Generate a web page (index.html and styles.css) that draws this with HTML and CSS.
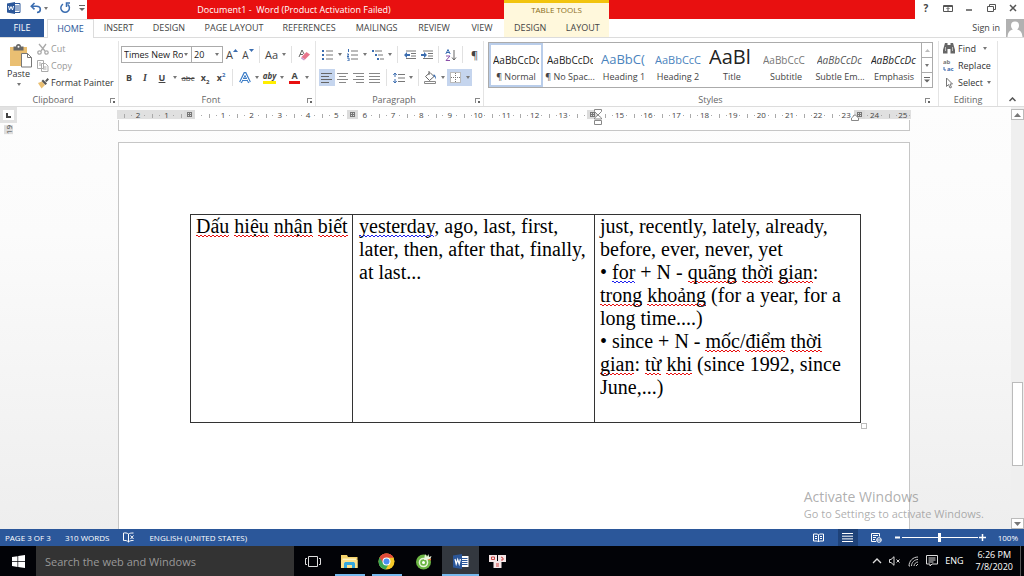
FILE: index.html
```html
<!DOCTYPE html>
<html lang="en">
<head>
<meta charset="utf-8">
<title>Document1 - Word</title>
<link rel="stylesheet" href="styles.css">
</head>
<body>

<header class="titlebar">
  <div class="quick">
    <svg class="word-logo" width="14" height="12" viewBox="0 0 14 12"><path d="M7 1.5h6v9H7z" fill="#fff" stroke="#2b579a"/><path d="M8 4h4M8 6h4M8 8h4" stroke="#2b579a"/><path d="M0 1.5L8 0v12L0 10.500z" fill="#2b579a"/><path d="M1.500 4l1 4L4 4.500 5.500 8l1-4" fill="none" stroke="#fff"/></svg>
    <button class="q-btn" aria-label="Undo"><svg width="12" height="12" viewBox="0 0 12 12" fill="none" stroke="#3b6db0" stroke-width="1.600"><path d="M4.500 1L1.300 4.200l3.200 3.200M1.500 4.200h5c5 0 5 5.800.5 6.300"/></svg></button>
    <i class="caret"></i>
    <button class="q-btn q-redo" aria-label="Repeat"><svg width="12" height="12" viewBox="0 0 12 12" fill="none" stroke="#3b6db0" stroke-width="1.500"><path d="M4 2.200A4.300 4.300 0 1 0 8.700 2.500M11 1H7.500v4"/></svg></button>
    <button class="q-btn q-more" aria-label="Customize toolbar"><svg width="6" height="7" viewBox="0 0 6 7"><path d="M0 .5h6" stroke="#666"/><path d="M0 3h6L3 6z" fill="#666"/></svg></button>
  </div>
  <div class="doc-title">Document1 -&nbsp; Word (Product Activation Failed)</div>
  <div class="tools-title">TABLE TOOLS</div>
  <div class="title-fill"></div>
  <div class="win-btns">
    <button aria-label="Help"><b>?</b></button>
    <button aria-label="Ribbon options"><svg width="10" height="9" viewBox="0 0 10 9" fill="none" stroke="#555"><path d="M.5 1.500h9v6h-9zM.5 2.500h9M5 7V4M3.500 5L5 3.500 6.500 5"/></svg></button>
    <button aria-label="Minimize"><svg width="8" height="8" viewBox="0 0 8 8"><path d="M1 6h6" stroke="#555" stroke-width="1.500"/></svg></button>
    <button aria-label="Restore"><svg width="9" height="8" viewBox="0 0 9 8" fill="none" stroke="#555"><path d="M.5 2.500h6v5h-6zM2.500 2.500v-2h6v5h-2"/></svg></button>
    <button aria-label="Close"><svg width="8" height="8" viewBox="0 0 8 8"><path d="M1 1l6 6M7 1L1 7" stroke="#555" stroke-width="1.500"/></svg></button>
  </div>
</header>

<nav class="tabs">
  <button class="tab file">FILE</button>
  <button class="tab active">HOME</button>
  <button class="tab t-ins">INSERT</button>
  <button class="tab t-des">DESIGN</button>
  <button class="tab t-page">PAGE LAYOUT</button>
  <button class="tab t-ref">REFERENCES</button>
  <button class="tab t-mail">MAILINGS</button>
  <button class="tab t-des">REVIEW</button>
  <button class="tab t-view">VIEW</button>
  <div class="tool-tabs">
    <button class="tab">DESIGN</button>
    <button class="tab">LAYOUT</button>
  </div>
  <a class="signin" href="#">Sign in</a>
  <svg class="avatar" width="18" height="18" viewBox="0 0 18 18"><path d="M0 0h18v18H0z" fill="#b1b1b1"/><path d="M9 2.500a4 4 0 0 1 4 4c0 2-1 3.500-2 4 3 .8 5 2 5.500 7.500h-15C2 12.500 4 11.300 7 10.500c-1-.5-2-2-2-4a4 4 0 0 1 4-4z" fill="#fff"/></svg>
</nav>

<section class="ribbon">
  <div class="group g-clip">
    <div class="group-body clip">
      <button class="paste">
        <svg width="22" height="24" viewBox="0 0 22 24"><path d="M0 3h17v19H0z" fill="#eabf72"/><path d="M3.500 2.500h2.500a2.500 2.500 0 0 1 5 0h2.500v4h-10z" fill="#666"/><circle cx="8.500" cy="2.700" r="1" fill="#fff"/><path d="M11.500 9.500h6l4 4v9.500h-10z" fill="#fff" stroke="#777"/><path d="M17.500 9.500v4h4" fill="none" stroke="#777"/></svg>
        <span>Paste</span><i class="caret"></i>
      </button>
      <div class="clip-list">
        <button class="off"><svg width="12" height="12" viewBox="0 0 12 12" fill="none" stroke="#aaa" stroke-width="1.300"><path d="M2 1l6 7M9 1L4 8"/><circle cx="2.500" cy="9.500" r="1.700"/><circle cx="9.500" cy="9.500" r="1.700"/></svg>Cut</button>
        <button class="off"><svg width="12" height="12" viewBox="0 0 12 12" fill="#fff" stroke="#aaa"><path d="M.5.5h6v8h-6zM4.500 3.500h4l2.500 2.500v5.500H4.500z"/><path d="M2 3h2M2 5h2M6 7h3.500M6 9h3.500"/></svg>Copy</button>
        <button><svg width="12" height="12" viewBox="0 0 12 12"><path d="M1 6l4-1.500L8 8l-3.500 3.500z" fill="#eabf72"/><path d="M4.500 4L6 2.500l4 4L8.500 8zM8 4l2.500-3L12 2.500 9.500 5z" fill="#555"/></svg>Format Painter</button>
      </div>
    </div>
    <div class="group-name">Clipboard<i class="launch"></i></div>
  </div>

  <div class="group g-font">
    <div class="group-body rows">
      <div class="row">
        <select class="combo c-name" aria-label="Font"><option>Times New Ro</option></select>
        <select class="combo c-size" aria-label="Font size"><option>20</option></select>
        <button class="b16 grow" aria-label="Grow font">A<svg width="5" height="3"><path d="M0 3L2.500 0 5 3z" fill="#3b6db0"/></svg></button>
        <button class="b16 grow shrink" aria-label="Shrink font">A<svg width="5" height="3"><path d="M0 0h5L2.500 3z" fill="#3b6db0"/></svg></button>
        <i class="sep"></i>
        <button class="b17 big">Aa</button><i class="caret"></i>
        <i class="sep"></i>
        <button class="b17" aria-label="Clear formatting"><svg width="12" height="12" viewBox="0 0 12 12"><path d="M1 8L4 1l2 4M2 5.500h3" fill="none" stroke="#666"/><path d="M3.500 8L8.500 3 12 5.500 7 10.500z" fill="#e8748c"/><path d="M3.500 8l3.500 2.500-1 1L3 9.500z" fill="#c9c"/></svg></button>
      </div>
      <div class="row">
        <button class="b16"><b>B</b></button>
        <button class="b16 ital"><b>I</b></button>
        <button class="b18 under"><b>U</b></button><i class="caret"></i>
        <button class="b18 strike">abc</button>
        <button class="b16"><b>x<sub>2</sub></b></button>
        <button class="b16"><b>x<sup>2</sup></b></button>
        <i class="sep"></i>
        <button class="b17 effect" aria-label="Text effects"><svg width="12" height="12" viewBox="0 0 12 12"><path d="M1.500 10.500L6 1l4.500 9.500M3.300 7.500h5.400" fill="none" stroke="#3f7fc8" stroke-width="3"/><path d="M1.500 10.500L6 1.500l4.500 9M3.300 7.500h5.400" fill="none" stroke="#fff" stroke-width="1"/></svg></button><i class="caret"></i>
        <button class="b17 mark"><em>aby</em></button><i class="caret"></i>
        <button class="b17 color"><b>A</b></button><i class="caret"></i>
      </div>
    </div>
    <div class="group-name">Font<i class="launch"></i></div>
  </div>

  <div class="group g-para">
    <div class="group-body rows">
      <div class="row">
        <button class="b17" aria-label="Bullets"><svg width="12" height="12" viewBox="0 0 12 12"><path d="M4 2h7M4 6h7M4 10h7" stroke="#777"/><path d="M0 2h2M0 6h2M0 10h2" stroke="#3b6db0" stroke-width="2"/></svg></button><i class="caret"></i>
        <button class="b17" aria-label="Numbering"><svg width="12" height="12" viewBox="0 0 12 12"><path d="M4 2h7M4 6h7M4 10h7" stroke="#777"/><path d="M1.500 0v3M0 5h1.500v1L0 7.500h2M0 9h2v3H0" stroke="#3b6db0" fill="none"/></svg></button><i class="caret"></i>
        <button class="b17" aria-label="Multilevel list"><svg width="12" height="12" viewBox="0 0 12 12"><path d="M3 2h7M6 6h5M8 10h4" stroke="#777"/><path d="M0 2h2M3 6h2M5 10h2" stroke="#3b6db0" stroke-width="2"/></svg></button><i class="caret"></i>
        <i class="sep"></i>
        <button class="b17" aria-label="Decrease indent"><svg width="12" height="10" viewBox="0 0 12 10"><path d="M2 1h10M7 3.500h5M7 6h5M2 8.500h10" stroke="#777"/><path d="M0 5l3-3v2h3v2H3v2z" fill="#3b6db0"/></svg></button>
        <button class="b17" aria-label="Increase indent"><svg width="12" height="10" viewBox="0 0 12 10"><path d="M2 1h10M7 3.500h5M7 6h5M2 8.500h10" stroke="#777"/><path d="M6 5L3 2v2H0v2h3v2z" fill="#3b6db0"/></svg></button>
        <i class="sep"></i>
        <button class="b17" aria-label="Sort"><svg width="12" height="12" viewBox="0 0 12 12" fill="none"><path d="M.8 5L3 .5 5.200 5M1.500 3.500h3" stroke="#3b6db0"/><path d="M1 7h4L1 11.500h4" stroke="#8a4fa8"/><path d="M9 1v10M7 8.500L9 11l2-2.500" stroke="#666"/></svg></button>
        <i class="sep"></i>
        <button class="b17 big">¶</button>
      </div>
      <div class="row">
        <button class="b16 on" aria-label="Align left"><svg width="12" height="10" viewBox="0 0 12 10"><path d="M0 .5h11M0 3.500h8M0 6.500h11M0 9.500h8" stroke="#666"/></svg></button>
        <button class="b16" aria-label="Center"><svg width="12" height="10" viewBox="0 0 12 10"><path d="M0 .5h11M2 3.500h7M0 6.500h11M2 9.500h7" stroke="#888"/></svg></button>
        <button class="b16" aria-label="Align right"><svg width="12" height="10" viewBox="0 0 12 10"><path d="M0 .5h11M3 3.500h8M0 6.500h11M3 9.500h8" stroke="#888"/></svg></button>
        <button class="b16" aria-label="Justify"><svg width="12" height="10" viewBox="0 0 12 10"><path d="M0 .5h11M0 3.500h11M0 6.500h11M0 9.500h11" stroke="#888"/></svg></button>
        <i class="sep"></i>
        <button class="b17" aria-label="Line spacing"><svg width="12" height="12" viewBox="0 0 12 12"><path d="M5 2.500h7M5 6h7M5 9.500h7" stroke="#777"/><path d="M2 1v4M2 7v4M.3 3L2 1l1.700 2M.3 9L2 11l1.700-2" stroke="#3b6db0" fill="none"/></svg></button><i class="caret"></i>
        <i class="sep"></i>
        <button class="b17" aria-label="Shading"><svg width="13" height="13" viewBox="0 0 13 13"><path d="M1.500 5.500L6 1.500l4 4-4.500 4z" fill="#fff" stroke="#666"/><path d="M5 0v4" stroke="#666"/><path d="M9.500 3.500c2 0 2.500 2 2.500 5-1-2-1-3-2.500-3z" fill="#3b6db0"/><path d="M.5 10.500h11v2H.5z" fill="#fff" stroke="#888"/></svg></button><i class="caret"></i>
        <button class="b17 on" aria-label="Borders"><svg width="11" height="11" viewBox="0 0 11 11"><path d="M0 0h11v11H0z" fill="#fff"/><path d="M.5.5h10v10H.5zM5.500 1v9M1 5.500h9" fill="none" stroke="#777" stroke-dasharray="1 1"/></svg></button><i class="caret on"></i>
      </div>
    </div>
    <div class="group-name">Paragraph<i class="launch"></i></div>
  </div>

  <div class="group g-styles">
    <div class="group-body">
      <div class="gallery">
        <button class="style picked"><span class="s-norm">AaBbCcDc</span><small>¶ Normal</small></button>
        <button class="style"><span class="s-norm">AaBbCcDc</span><small>¶ No Spac...</small></button>
        <button class="style"><span class="s-h1">AaBbC(</span><small>Heading 1</small></button>
        <button class="style"><span class="s-h2">AaBbCcC</span><small>Heading 2</small></button>
        <button class="style"><span class="s-title">AaBl</span><small>Title</small></button>
        <button class="style"><span class="s-sub">AaBbCcC</span><small>Subtitle</small></button>
        <button class="style"><span class="s-subtle">AaBbCcDc</span><small>Subtle Em...</small></button>
        <button class="style"><span class="s-emph">AaBbCcDc</span><small>Emphasis</small></button>
        <div class="gal-scroll">
          <button aria-label="Row up"><svg width="5" height="3"><path d="M0 3L2.500 0 5 3z" fill="#bbb"/></svg></button>
          <button aria-label="Row down"><i class="caret"></i></button>
          <button aria-label="More styles"><svg width="6" height="6"><path d="M0 .5h6" stroke="#666"/><path d="M0 2.500h6L3 5.500z" fill="#666"/></svg></button>
        </div>
      </div>
    </div>
    <div class="group-name">Styles<i class="launch"></i></div>
  </div>

  <div class="group g-edit">
    <div class="group-body edit">
      <button><svg width="12" height="11" viewBox="0 0 12 11"><path d="M2 0h2.500v2h3V0H10l2 7v3.500H7.500V6h-3v4.500H0V7z" fill="#666"/><path d="M2.500 4v4M9.500 4v4" stroke="#bbb"/></svg>Find<i class="caret far"></i></button>
      <button><svg class="rep" width="12" height="13" viewBox="0 0 12 13"><text x="0" y="5">ab</text><text x="4" y="12" class="ac">ac</text><path d="M1 8v3h2" fill="none" stroke="#3b6db0"/></svg>Replace</button>
      <button><svg width="12" height="12" viewBox="0 0 12 12"><path d="M3.500 1v8.500l2-2 1.500 3.500 1.500-.7L7 7h2.500z" fill="#fff" stroke="#777"/></svg>Select<i class="caret"></i></button>
    </div>
    <div class="group-name">Editing</div>
  </div>
  <button class="collapse" aria-label="Collapse ribbon"><svg width="7" height="5"><path d="M.5 4L3.500 1l3 3" fill="none" stroke="#555" stroke-width="1.500"/></svg></button>
</section>

<main class="work">
  <div class="vruler">
    <div class="corner"><span><svg width="5" height="5"><path d="M1 0v4h4" fill="none" stroke="#444" stroke-width="2"/></svg></span></div>
    <span class="vnum">19</span>
  </div>

  <div class="canvas">
    <div class="ruler">
      <ul>
        <li>2</li><li>1</li><li></li><li>1</li><li>2</li><li>3</li><li>4</li><li>5</li><li>6</li><li>7</li><li>8</li><li>9</li><li>10</li><li>11</li><li>12</li><li>13</li><li></li><li>15</li><li>16</li><li>17</li><li>18</li><li>19</li><li>20</li><li>21</li><li>22</li><li>23</li><li>24</li><li>25</li>
      </ul>
      <i class="col-mark m1"></i><i class="col-mark m2"></i><i class="col-mark m3"></i><i class="col-mark m4"></i>
      <svg class="indent" width="8" height="16" viewBox="0 0 8 16" fill="#fff" stroke="#888"><path d="M.5.500h7v2L4 6 .5 2.500zM.5 10V9L4 6l3.500 3v1zM.5 11.500h7v4h-7z"/></svg>
      <svg class="indent-r" width="8" height="7" viewBox="0 0 8 7" fill="#fff" stroke="#888"><path d="M.5 6.500V4L4 .7 7.500 4v2.500z"/></svg>
    </div>
    <div class="page-prev"></div>
    <article class="page">
      <table class="doc-table">
        <tr>
          <td class="c1"><u>Dấu</u> <u>hiệu</u> <u>nhận</u> <u>biết</u></td>
          <td class="c2"><u class="gram">yesterday</u>, ago, last, first,<br>later, then, after that, finally,<br>at last...</td>
          <td class="c3">just, recently, lately, already,<br>before, ever, never, yet<br>• <u class="gram">for</u> + N - <u>quãng</u> <u>thời</u> <u>gian</u>:<br><u>trong</u> <u>khoảng</u> (for a year, for a<br>long time....)<br>• since + N - <u>mốc</u>/<u>điểm</u> <u>thời</u><br><u>gian</u>: <u>từ</u> <u>khi</u> (since 1992, since<br>June,...)<br>&nbsp;</td>
        </tr>
      </table>
      <i class="handle"></i>
    </article>
  </div>

  <div class="scroll">
    <button aria-label="Scroll up"><svg width="7" height="4"><path d="M0 4l3.500-4L7 4z" fill="#777"/></svg></button>
    <div class="track"><div class="thumb"></div></div>
    <button aria-label="Scroll down"><svg width="7" height="4"><path d="M0 0h7L3.500 4z" fill="#777"/></svg></button>
  </div>

  <div class="watermark">
    <p class="wm-big">Activate Windows</p>
    <p>Go to Settings to activate Windows.</p>
  </div>
</main>

<footer class="status">
  <span>PAGE 3 OF 3</span>
  <span>310 WORDS</span>
  <svg width="12" height="11" viewBox="0 0 12 11" fill="none" stroke="#fff"><path d="M5.500 2C4 .8 2 .8.5 1v7.500c2-.2 3.500 0 5 1.500V2c1-.8 2.500-1 5-1M5.500 10c1.500-1.500 3-1.500 5-1.500M7.500 3.500l3 3.500M10.500 3.500L7.500 7"/></svg>
  <span>ENGLISH (UNITED STATES)</span>
  <div class="views">
    <button aria-label="Read mode"><svg width="11" height="10" viewBox="0 0 11 10" fill="none" stroke="#fff"><path d="M.5 1h4l1 1 1-1h4v7h-4l-1 1-1-1h-4zM5.500 2v7M2 3.500h2M2 5.500h2M7 3.500h2M7 5.500h2"/></svg></button>
    <button class="cur" aria-label="Print layout"><svg width="11" height="9" viewBox="0 0 11 9"><path d="M0 .5h11M0 3.200h11M0 5.900h11M0 8.500h11" stroke="#fff"/></svg></button>
    <button aria-label="Web layout"><svg width="11" height="10" viewBox="0 0 11 10" fill="none" stroke="#fff"><path d="M5 8.500H.5v-8h8v3M2 2.500h5M2 4.500h3M2 6.500h2"/><circle cx="8" cy="7" r="2.300"/><path d="M6 7h4"/></svg></button>
  </div>
  <div class="zoom">
    <button aria-label="Zoom out"><svg width="7" height="7"><path d="M1 3.500h5" stroke="#fff" stroke-width="2"/></svg></button>
    <input type="range" min="0" max="100" value="50" aria-label="Zoom">
    <button aria-label="Zoom in"><svg width="7" height="7"><path d="M0 3.500h7M3.500 0v7" stroke="#fff" stroke-width="1.500"/></svg></button>
    <span>100%</span>
  </div>
</footer>

<div class="taskbar">
  <button class="start" aria-label="Start"><svg width="13" height="13" viewBox="0 0 13 13" fill="#fff"><path d="M0 2l5.500-.8v5H0zM6.200 1L13 0v6.200H6.200zM0 6.900h5.500v5L0 11.100zM6.200 6.900H13V13l-6.800-1z"/></svg></button>
  <input class="search" type="text" placeholder="Search the web and Windows" aria-label="Search the web and Windows">
  <button class="app" aria-label="Task view"><svg width="16" height="11" viewBox="0 0 16 11" fill="none" stroke="#ddd"><path d="M3.500.5h9v10h-9zM2 2.500H.5v6H2M14 2.500h1.500v6H14"/></svg></button>
  <button class="app open" aria-label="File Explorer"><svg width="17" height="15" viewBox="0 0 17 15"><path d="M0 1h6l1 2h9.500v11H0z" fill="#f5d36b"/><path d="M1.500 4.500H15V8H1.500z" fill="#fff3c0"/><path d="M0 6h16.500v8H0z" fill="#fbe08a"/><path d="M3 14V9.500L4 8h9l1 1.500V14h-3v-3H6v3z" fill="#35a7dd"/></svg></button>
  <button class="app open" aria-label="Chrome"><svg width="17" height="17" viewBox="0 0 17 17"><circle cx="8.500" cy="8.500" r="8" fill="#f6c928"/><path d="M8.500 8.500L1.600 4.500a8 8 0 0 1 13.800 0z" fill="#df4b3b"/><path d="M1.600 4.500a8 8 0 0 0 6 12l3.500-6z" fill="#3aa757"/><path d="M8.500 4.500h6.900l1 4h-6z" fill="#f6c928"/><path d="M1.600 4.500a8 8 0 0 1 13.800 0H8.500L5 10z" fill="#df4b3b"/><circle cx="8.500" cy="8.500" r="4" fill="#fff"/><circle cx="8.500" cy="8.500" r="3" fill="#4a8df0"/></svg></button>
  <button class="app" aria-label="Coc Coc"><svg width="16" height="17" viewBox="0 0 16 17"><circle cx="7.500" cy="9" r="7.500" fill="#6cb644"/><circle cx="7.500" cy="9.500" r="4.800" fill="#e8f4dc"/><circle cx="7.500" cy="9.500" r="3.300" fill="#6cb644"/><circle cx="7.500" cy="9.500" r="1.500" fill="#fff"/><path d="M8 7l1-6 2 3 1.500-3 .5 3 2.500-1-1.500 4z" fill="#e8f4dc"/><path d="M11 6.500l4-1v2z" fill="#e8793a"/></svg></button>
  <button class="app open cur" aria-label="Word"><svg width="16" height="15" viewBox="0 0 16 15"><path d="M8 2h7.500v11H8z" fill="#fff"/><path d="M9 4.500h5.500M9 6.500h5.500M9 8.500h5.500M9 10.500h5.500" stroke="#2b579a"/><path d="M0 1.500L9 0v15l-9-1.500z" fill="#2b579a"/><path d="M2 5l1.200 5L4.700 5.500 6.200 10l1.200-5" fill="none" stroke="#fff" stroke-width="1.200"/></svg></button>
  <button class="app" aria-label="UniKey"><svg width="17" height="13" viewBox="0 0 17 13"><path d="M0 0h8v7H0zM9 0h8v7H9zM4.500 6h8v7h-8z" fill="#f4e6e6"/><path d="M2.500 2h3v2.500h-3zM12 2l2 1v2h-2M7 9h3M7 11h3" fill="none" stroke="#c44"/></svg></button>
  <div class="tray">
    <svg width="10" height="6"><path d="M1 5l4-4 4 4" fill="none" stroke="#ddd" stroke-width="1.300"/></svg>
    <svg width="12" height="10" viewBox="0 0 12 10" fill="none" stroke="#ddd"><path d="M.5 3.500H2L5 .7v8.600L2 6.500H.5zM7.500 3.500l3 3M10.500 3.500l-3 3"/></svg>
    <svg width="11" height="11" viewBox="0 0 11 11" fill="none" stroke="#ccc"><path d="M1 10C1 5 5 1 10 1M3.500 10C3.500 6.500 6.500 3.500 10 3.500M6 10c0-2 2-4 4-4M8 10l2-2M1 10h1"/></svg>
    <svg width="12" height="12" viewBox="0 0 12 12" fill="none" stroke="#ddd"><path d="M.5.5h11v8.500H6L4 11V9H.5zM2.500 3h7M2.500 5h7M2.500 7h5"/></svg>
    <span>ENG</span>
    <time>6:26 PM<br>7/8/2020</time>
  </div>
  <i class="peek"></i>
</div>

</body>
</html>
```
FILE: styles.css
```css
* {
  box-sizing: border-box;
}
body {
  margin: 0;
  height: 100vh;
  display: grid;
  grid-template-rows: 19px 19px 69px 1fr 17px 30px;
  grid-template-columns: minmax(0, 1fr);
  overflow: hidden;
  background: #fff;
  color: #444;
  font-family: "Open Sans", "Noto Sans", sans-serif;
  font-size: 9px;
  line-height: 12px;
}
button {
  border: 0;
  padding: 0;
  background: none;
  color: inherit;
  font: inherit;
  display: flex;
  align-items: center;
  justify-content: center;
  white-space: nowrap;
}
svg {
  flex: none;
}

/* title bar */
.titlebar {
  display: flex;
}
.quick {
  width: 87px;
  display: flex;
  align-items: center;
  padding: 0 2px 3px 7px;
}
.q-btn {
  margin-left: 9px;
}
.q-more {
  margin-left: auto;
}
.caret {
  width: 8px;
  flex: none;
  display: flex;
  align-items: center;
  justify-content: center;
}
.caret::before {
  content: "";
  border: 2px solid transparent;
  border-top: 3px solid #777;
  border-bottom: 0;
}
.doc-title {
  width: 417px;
  padding-top: 4px;
  background: #e81010;
  color: #fff;
  text-align: center;
  padding-right: 3px;
}
.tools-title {
  width: 105px;
  background: #fff8dc;
  border-top: 3px solid #f2c40f;
  color: #8a6d1c;
  text-align: center;
  padding-top: 1px;
  font-size: 8px;
}
.title-fill {
  flex: 1;
  background: #e81010;
}
.win-btns {
  width: 109px;
  display: flex;
  padding-bottom: 3px;
}
.win-btns button {
  flex: 1;
}
.win-btns b {
  font-size: 10px;
}

/* tabs */
.tabs {
  display: flex;
  border-bottom: 1px solid #dcdcdc;
}
.tab {
  padding: 0 11px;
  font-size: 9px;
}
.file {
  width: 44px;
  margin-right: 3px;
  background: #2b579a;
  color: #fff;
}
.active {
  width: 47px;
  border: 1px solid #dcdcdc;
  border-bottom: 0;
  margin-bottom: -1px;
  background: #fff;
  color: #2b579a;
}
.t-ins { width: 49px; }
.t-des { width: 52px; }
.t-page { width: 78px; }
.t-ref { width: 72px; }
.t-mail { width: 63px; }
.t-view { width: 44px; }
.tool-tabs {
  width: 105px;
  display: flex;
  background: #fff8dc;
}
.tool-tabs .tab {
  flex: 1;
  padding: 0;
}
.signin {
  margin-left: auto;
  align-self: center;
  color: #444;
  text-decoration: none;
  margin-right: 6px;
}

/* ribbon */
.ribbon {
  display: flex;
  padding-top: 3px;
  border-bottom: 1px solid #dcdcdc;
}
.group {
  display: flex;
  flex: none;
  flex-direction: column;
  border-right: 1px solid #e4e4e4;
}
.g-clip { width: 119px; }
.g-font { width: 197px; padding-left: 2px; }
.g-para { width: 168px; padding-left: 3px; }
.g-styles { flex: 1; min-width: 0; padding: 0 5px 0 4px; }
.g-edit { width: 59px; }
.group-body {
  height: 53px;
}
.group-name {
  text-align: center;
  position: relative;
  color: #666;
  font-size: 9px;
}
.g-clip .group-name {
  padding-right: 12px;
}
.g-font .group-name,
.g-para .group-name {
  padding-right: 14px;
}
.launch {
  position: absolute;
  right: 3px;
  top: 4px;
  width: 5px;
  height: 5px;
  border-left: 1px solid #888;
  border-top: 1px solid #888;
}
.launch::after {
  content: "";
  position: absolute;
  right: 0;
  bottom: 0;
  width: 2px;
  height: 2px;
  background: #666;
}
.clip {
  display: flex;
}
.paste {
  width: 37px;
  flex-direction: column;
  justify-content: flex-start;
  padding-top: 3px;
  color: #333;
}
.paste svg {
  margin-left: 4px;
}
.paste .caret {
  height: 8px;
}
.clip-list {
  display: flex;
  flex-direction: column;
  gap: 5px;
  padding-top: 2px;
}
.clip-list button {
  justify-content: flex-start;
  gap: 2px;
  color: #333;
}
.clip-list .off {
  color: #999;
}
.rows {
  display: flex;
  flex-direction: column;
  gap: 6px;
  padding-top: 5px;
}
.row {
  display: flex;
  align-items: stretch;
  height: 17px;
}
.combo {
  appearance: none;
  border: 1px solid #ababab;
  border-radius: 0;
  padding: 0 8px 0 2px;
  color: #222;
  font: inherit;
  background: #fff url("data:image/svg+xml,%3Csvg xmlns='http://www.w3.org/2000/svg' width='4' height='3'%3E%3Cpath d='M0 0h4L2 3z' fill='%23777'/%3E%3C/svg%3E") no-repeat right 3px center;
}
.c-name {
  width: 71px;
}
.c-size {
  width: 32px;
  margin: 0 1px 0 -1px;
}
.b16 { width: 16px; }
.b17 { width: 17px; }
.b18 { width: 18px; }
.sep {
  width: 1px;
  margin: 0 3px;
  background: #e1e1e1;
}
.on {
  background: #c5d5ee;
}
.grow {
  font-size: 11px;
  align-items: center;
}
.grow svg {
  align-self: flex-start;
  margin-top: 3px;
}
.shrink {
  font-size: 10px;
}
.big {
  font-size: 11px;
}
.ital {
  font-style: italic;
  font-family: "Liberation Serif", serif;
  font-size: 10px;
}
.under {
  text-decoration: underline;
}
.strike {
  text-decoration: line-through;
  font-size: 8px;
}
sub, sup {
  font-size: 6px;
  line-height: 1px;
}
sup {
  color: #3b6db0;
}
.mark em {
  font-weight: bold;
  font-size: 8px;
  line-height: 10px;
  border-bottom: 3px solid #ffee00;
}
.color b {
  line-height: 10px;
  padding: 0 2px;
  border-bottom: 3px solid #e81010;
}

.gallery {
  display: flex;
  height: 46px;
  margin-top: 1px;
  border: 1px solid #ababab;
}
.style {
  flex: 1;
  min-width: 0;
  flex-direction: column;
  justify-content: flex-end;
  padding: 0 2px 2px;
  overflow: hidden;
  border: 2px solid transparent;
}
.picked {
  border-color: #b9cdea;
}
.style span {
  width: 100%;
  overflow: hidden;
  text-align: left;
  color: #222;
}
.style small {
  font-size: 9px;
  line-height: 12px;
  margin-top: 3px;
}
.s-norm, .s-sub, .s-subtle, .s-emph {
  font-size: 10px;
  line-height: 16px;
}
.style .s-h1 {
  font-size: 13px;
  line-height: 18px;
  color: #4a83bd;
}
.style .s-h2 {
  font-size: 11px;
  line-height: 17px;
  color: #4a83bd;
}
.style .s-title {
  font-size: 20px;
  line-height: 24px;
}
.style .s-sub {
  color: #777;
}
.s-subtle, .s-emph {
  font-style: italic;
}
.style .s-subtle {
  color: #555;
}
.gal-scroll {
  width: 11px;
  display: flex;
  flex-direction: column;
  border-left: 1px solid #ababab;
}
.gal-scroll button {
  flex: 1;
}
.gal-scroll button + button {
  border-top: 1px solid #ababab;
}
.edit {
  display: flex;
  flex-direction: column;
  gap: 4px;
  padding: 1px 0 0 4px;
}
.edit button {
  height: 13px;
  justify-content: flex-start;
  gap: 3px;
  color: #333;
}
.edit .caret {
  width: 6px;
}
.edit .far {
  margin-left: 3px;
}
.rep text {
  font: bold 6px "Open Sans", sans-serif;
  fill: #777;
}
.rep .ac {
  fill: #3b6db0;
}
.collapse {
  width: 26px;
  align-self: flex-end;
  justify-content: flex-end;
  padding: 0 8px 4px 0;
}

/* document area */
.work {
  display: flex;
  position: relative;
  overflow: hidden;
  background: linear-gradient(#fdfdfd, #fbfbfb 30%, #eee);
}
.vruler {
  width: 17px;
}
.corner {
  height: 16px;
  padding: 3px;
  background: #e2e2e2;
}
.corner span {
  display: flex;
  height: 10px;
  align-items: center;
  justify-content: center;
  background: #fff;
}
.vnum {
  display: block;
  width: 9px;
  margin: 2px 0 0 4px;
  writing-mode: vertical-rl;
  transform: rotate(180deg);
  background: #ddd;
  font-size: 8px;
  line-height: 9px;
}
.canvas {
  flex: 1;
  display: flex;
  flex-direction: column;
  align-items: center;
}
.ruler {
  width: 794px;
  height: 9px;
  margin-top: 3px;
  padding-left: 7px;
  position: relative;
  background: linear-gradient(90deg, #e0e0e0 78px, #fff 78px, #fff 742px, #e0e0e0 742px);
}
.ruler ul {
  display: grid;
  grid-template-columns: repeat(28, 1fr);
  margin: 0 -6px 0 0;
  padding: 0;
  list-style: none;
}
.ruler li {
  text-align: center;
  font-size: 8px;
  line-height: 10px;
  background:
    linear-gradient(#aaa, #aaa) 0 4px / 1px 4px no-repeat,
    linear-gradient(#aaa, #aaa) 25% 5px / 1px 1px no-repeat,
    linear-gradient(#aaa, #aaa) 75% 5px / 1px 1px no-repeat;
}
/* column handles on the ruler */
.col-mark {
  position: absolute;
  top: 0;
  width: 11px;
  height: 9px;
  border: 2px solid #dcdcdc;
  border-width: 2px 3px;
  background:
    repeating-linear-gradient(90deg, #777 0 1px, transparent 1px 2px),
    repeating-linear-gradient(#777 0 1px, #ddd 1px 2px);
  background-clip: padding-box;
}
.m1 { left: 67px; }
.m2 { left: 230px; }
.m3 { left: 470px; }
.m4 { left: 737px; }
.indent {
  position: absolute;
  left: 477px;
  top: -1px;
}
.indent-r {
  position: absolute;
  left: 734px;
  top: 4px;
}
.page-prev {
  width: 792px;
  height: 11px;
  flex: none;
  border: 1px solid #c6c6c6;
  border-top: 0;
  background: #fff;
  margin: 1px 0 11px;
}
.page {
  width: 792px;
  flex: 1;
  padding: 71px 0 0 71px;
  position: relative;
  border: 1px solid #c6c6c6;
  border-bottom: 0;
  background: #fff;
}
.doc-table {
  border-collapse: collapse;
  color: #000;
  font-family: "Liberation Serif", serif;
  font-size: 20px;
  line-height: 23px;
}
.doc-table td {
  border: 1px solid #333;
  padding: 0 0 0 5px;
  vertical-align: top;
  white-space: nowrap;
}
.doc-table .c1 { width: 162px; }
.doc-table .c2 { width: 242px; padding-left: 6px; }
.doc-table .c3 { width: 266px; }
.doc-table u {
  --wave: #e81010;
  text-decoration: none;
  background:
    linear-gradient(90deg, var(--wave) 50%, transparent 50%) 0 calc(100% - 1px) / 4px 1px repeat-x,
    linear-gradient(90deg, var(--wave) 50%, transparent 50%) 2px 100% / 4px 1px repeat-x;
}
.doc-table .gram {
  --wave: #2222ee;
}
.handle {
  display: block;
  width: 6px;
  height: 6px;
  margin-left: 671px;
  border: 1px solid #bbb;
  background: #fff;
}
.scroll {
  width: 13px;
  display: flex;
  flex-direction: column;
  padding-top: 2px;
  background: #efefef;
}
.scroll button {
  height: 11px;
  border: 1px solid #bbb;
  background: #fff;
}
.track {
  flex: 1;
  display: flex;
  flex-direction: column;
  justify-content: flex-end;
  padding: 0 1px 52px;
}
.thumb {
  height: 84px;
  border: 1px solid #bbb;
  background: #fff;
}
.watermark {
  position: absolute;
  right: 40px;
  bottom: 8px;
  color: rgba(130, 130, 130, .65);
  font-size: 11px;
  line-height: 15px;
  white-space: nowrap;
}
.watermark p {
  margin: 0;
}
.watermark .wm-big {
  font-size: 14px;
  line-height: 19px;
}

/* status bar */
.status {
  display: flex;
  align-items: center;
  gap: 14px;
  padding-left: 5px;
  background: #2b579a;
  color: #fff;
  font-size: 8px;
}
.views {
  display: flex;
  align-self: stretch;
  margin-left: auto;
}
.views button {
  width: 20px;
  margin-left: 9px;
}
.views .cur {
  background: #1e4279;
}
.zoom {
  display: flex;
  align-items: center;
  gap: 1px;
  margin-left: -7px;
  padding-right: 6px;
}
.zoom span {
  margin-left: 11px;
}
.zoom input {
  appearance: none;
  width: 76px;
  height: 9px;
  margin: 0;
  background: linear-gradient(#fff, #fff) center / 100% 1px no-repeat;
}
.zoom input::-webkit-slider-thumb {
  appearance: none;
  width: 3px;
  height: 9px;
  background: #fff;
}

/* taskbar */
.taskbar {
  display: flex;
  background: #020307;
  color: #fff;
}
.start {
  width: 36px;
}
.search {
  width: 258px;
  border: 0;
  padding: 0 9px;
  background: #333;
  color: #fff;
  font: 11px "Open Sans", sans-serif;
}
.search::placeholder {
  color: #999;
}
.app {
  width: 37px;
  border: solid transparent;
  border-width: 2px 0;
}
.app.open {
  background: linear-gradient(#76b9ed, #76b9ed) center 28px / 30px 2px no-repeat border-box;
}
.app.open.cur {
  background: #33383f;
  border-bottom-color: #76b9ed;
}
.tray {
  display: flex;
  align-items: center;
  gap: 7px;
  margin-left: auto;
  padding-right: 7px;
}
.tray time {
  margin-left: 5px;
  text-align: center;
}
.peek {
  width: 4px;
  border-left: 1px solid #555;
}
```
